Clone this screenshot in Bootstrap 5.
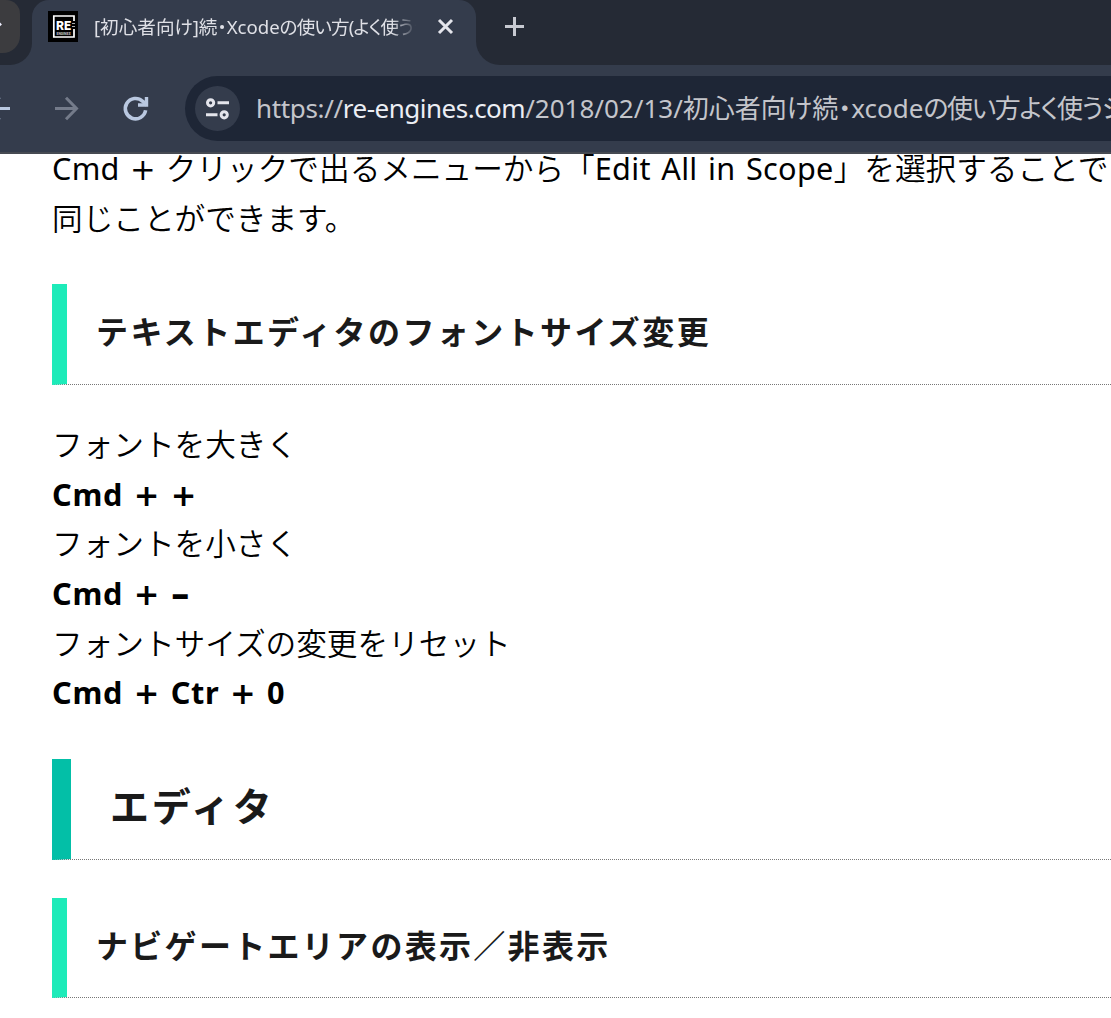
<!DOCTYPE html>
<html lang="ja">
<head>
<meta charset="utf-8">
<title>[初心者向け]続・Xcodeの使い方</title>
<link rel="stylesheet" href="https://cdn.jsdelivr.net/npm/bootstrap@5.3.0/dist/css/bootstrap.min.css">
<style>
body{width:1111px;height:1018px;overflow:hidden;background:#fff;color:#000;font-family:"Noto Sans","Noto Sans CJK JP",sans-serif}
.tabstrip{height:65px;background:#252a35}
.prev-cap{width:32px;height:65px;background:#343c4c}
.prev-fill{width:32px;height:65px;background:#252a35;border-bottom-right-radius:22px}
.prev-btn{width:20px;height:53px;background:#3c3c3f;border-bottom-right-radius:17px;border-top-right-radius:14px}
.active-tab{width:444px;height:65px;background:#343c4c;border-radius:17px 17px 0 0;padding-left:16px}
.favicon{margin-top:11px}
.tab-label{width:322px;margin-left:16px;height:40px;line-height:40px;margin-top:7px;font-size:18.6px;color:#dfe0e6;font-feature-settings:"palt";-webkit-mask-image:linear-gradient(90deg,#000 298px,transparent 322px);mask-image:linear-gradient(90deg,#000 298px,transparent 322px)}
.close-x{margin:18px 0 0 21px}
.rest-cap{background:#343c4c}
.rest-fill{height:65px;background:#252a35;border-bottom-left-radius:24px;padding:16px 0 0 28px}
.toolbar{height:89px;background:#343c4c;border-bottom:2px solid #464a52}
.omnibox{margin-left:34px;margin-top:11px;height:65px;background:#1e2636;border-radius:33px 0 0 33px;padding-left:10px}
.site-info{width:45px;height:45px;background:#343c4c}
.url{font-size:26px;color:#c4c5cb;margin-left:16px;line-height:65px;font-feature-settings:"palt"}
.url b{font-weight:400;color:#eceef4;letter-spacing:-.5px}
.scheme{letter-spacing:-.35px}
.tight{letter-spacing:-.9px}
.url .tight{letter-spacing:-1.4px}
.article{margin-left:52px}
.copy{font-size:30.65px;line-height:49.6px;font-weight:350;word-spacing:2.2px}
.copy i{font-style:normal;font-family:"DejaVu Sans",sans-serif;font-weight:400;line-height:1}
.copy b{font-weight:700;letter-spacing:.75px;word-spacing:1.8px}
.copy b i{font-weight:700}
.copy .dash{font-size:38px;vertical-align:-2px}
.latin{letter-spacing:.3px;font-weight:400}
.h-sub,.h-main{height:101px;border-bottom:1px dotted #777;color:#1a1a1a;font-weight:700;line-height:93px;font-family:"Noto Sans CJK JP",sans-serif}
.h-sub{border-left:15px solid #1debb9;padding-left:29px;font-size:32px;letter-spacing:2.4px}
.h-main{border-left:19px solid #03bfa7;padding-left:39px;font-size:39px;letter-spacing:2.8px;line-height:90px}
.h-last{height:100px;letter-spacing:2.3px}
</style>
<script src="https://cdn.jsdelivr.net/npm/bootstrap@5.3.0/dist/js/bootstrap.bundle.min.js"></script>
</head>
<body>
<header>
<div class="tabstrip d-flex overflow-hidden">
<div class="prev-cap flex-shrink-0"><div class="prev-fill"><div class="prev-btn">
<svg class="d-block" width="20" height="50" viewBox="0 0 20 50"><path d="M-3 27.500L1 23.500" stroke="#eef" stroke-width="2.600"/></svg></div></div></div>
<div class="active-tab d-flex flex-shrink-0">
<svg class="favicon flex-shrink-0" width="30" height="31" viewBox="0 0 30 31"><rect width="30" height="31"/><path d="M26 10V5H5.800V26H26V18" fill="none" stroke="#fff" stroke-width="1.700"/><path d="M24 12.500h3M24 15.500h3" stroke="#aaa" stroke-width="1"/><text x="8" y="18.500" font-family="Roboto,sans-serif" font-weight="900" font-size="13.500" textLength="15" lengthAdjust="spacingAndGlyphs" fill="#fff">RE</text><text x="8.500" y="23.500" font-family="Roboto,sans-serif" font-weight="700" font-size="4" textLength="14" lengthAdjust="spacingAndGlyphs" fill="#ccc">ENGINES</text></svg>
<div class="tab-label text-nowrap overflow-hidden flex-shrink-0"><span>[初心者向け]続・Xcode</span><span class="tight">の使い方(よく使うシ</span></div>
<svg class="close-x flex-shrink-0" width="17" height="17" viewBox="0 0 17 17"><path d="M2 2L15 15M15 2L2 15" stroke="#e4e5ec" stroke-width="3"/></svg>
</div>
<div class="rest-cap flex-grow-1"><div class="rest-fill"><svg class="d-block" width="21" height="21" viewBox="0 0 21 21"><path d="M10.500 1V20M1 10.500H20" stroke="#c7c9d1" stroke-width="3"/></svg></div></div>
</div>
<div class="toolbar d-flex overflow-hidden">
<svg class="flex-shrink-0" width="151" height="87" viewBox="0 65 151 87" fill="none" stroke-width="3">
<path d="M0 108.500H10" stroke="#b9c8e0"/><path d="M-1 99.500L.800 98M-1 117.500L.800 119" stroke="#77839a" stroke-width="1"/>
<path d="M55 108.500H77M66 97.800L76.500 108.500L66 119.200" stroke="#747b8a"/>
<path d="M145.600 110.300A10.200 10.200 0 1 1 142.500 101.200L147 105" stroke="#b9c8e0" stroke-width="3.600"/><path d="M138 105H146.500V97" stroke="#b9c8e0" stroke-width="3.400"/>
</svg>
<div class="omnibox d-flex align-items-center flex-grow-1 text-nowrap overflow-hidden">
<div class="site-info rounded-circle flex-shrink-0"><svg class="d-block" width="45" height="45" viewBox="195 86 45 45" fill="none" stroke="#e4e5ec" stroke-width="3"><circle cx="210.600" cy="102.800" r="3.100"/><path d="M217.500 102.800H229M206 114.800H217.500"/><circle cx="224.200" cy="114.800" r="3.100"/></svg></div>
<div class="url"><span class="scheme">https://</span><b>re-engines.com</b><span>/2018/02/13/</span><span>初心者向け続・</span><span>xcode</span><span class="tight">の使い方よく使うシ</span></div>
</div></div>
</header>
<main class="article">
<p class="copy text-nowrap mb-0" style="margin-top:-10px"><span class="latin">Cmd</span> <i>+</i> クリックで出るメニューから「<span class="latin">Edit All in Scope</span>」を選択することで<br>同じことができます。</p>
<h3 class="h-sub mb-0" style="margin-top:41px">テキストエディタのフォントサイズ変更</h3>
<p class="copy mb-0" style="margin-top:35px">フォントを大きく<br><b>Cmd <i>+</i> <i>+</i></b><br>フォントを小さく<br><b>Cmd <i>+</i> <i class="dash">–</i></b><br>フォントサイズの変更をリセット<br><b>Cmd <i>+</i> Ctr <i>+</i> 0</b></p>
<h2 class="h-main mb-0" style="margin-top:41px">エディタ</h2>
<h3 class="h-sub h-last mb-0" style="margin-top:38px">ナビゲートエリアの表示／非表示</h3>
</main>
</body>
</html>
